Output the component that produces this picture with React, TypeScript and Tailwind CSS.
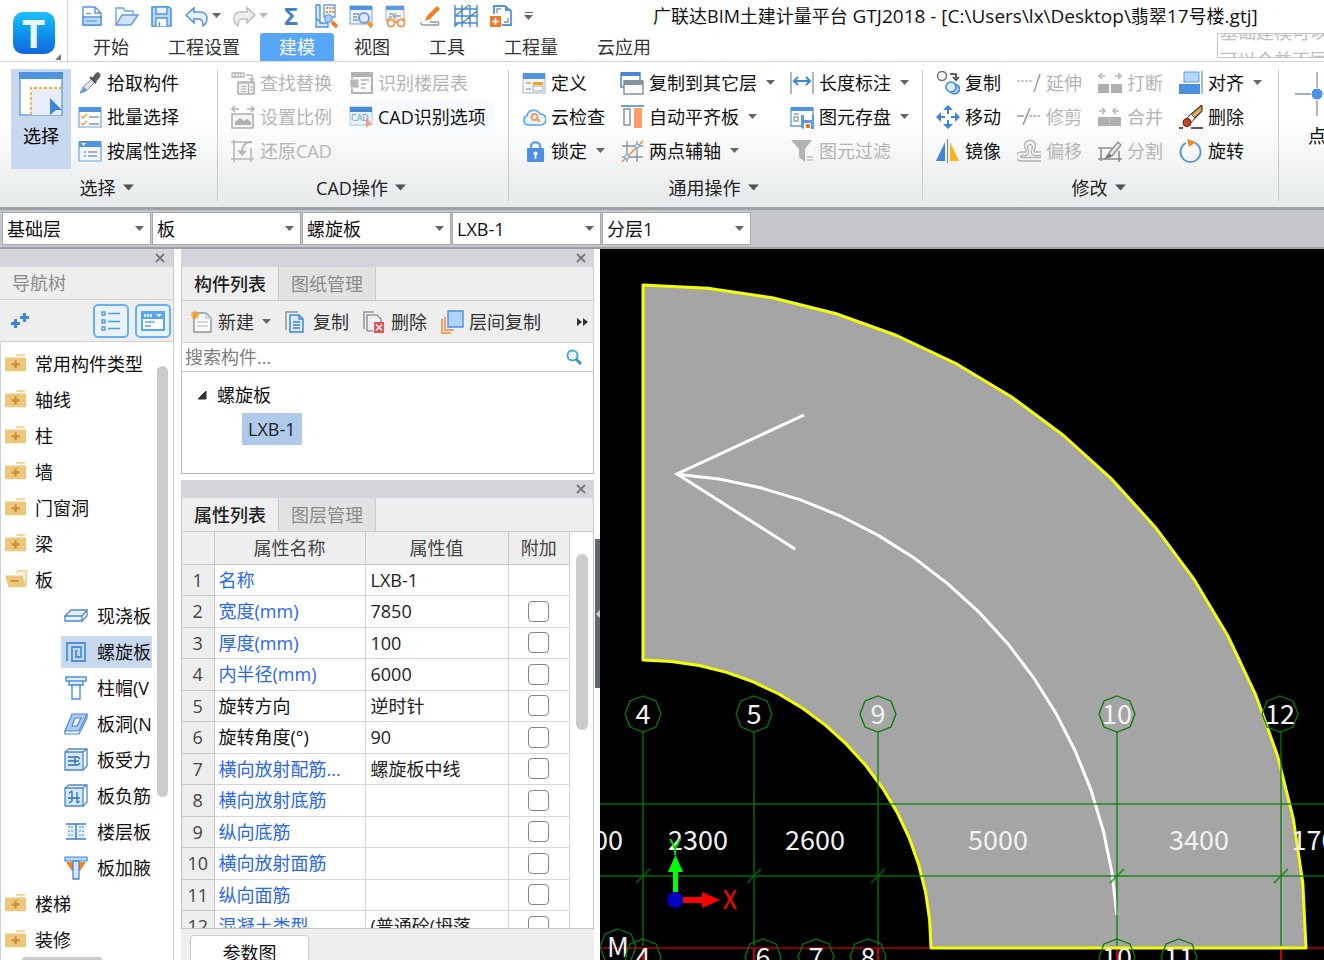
import { useState } from "react";
import type { ReactNode } from "react";
import clsx from "clsx";

const GLYPHS: Record<string, ReactNode> = {
  file: (
    <>
      <path d="M3 3h12l6 6v12H3z" fill="#fff" stroke="#4f94e0" strokeWidth="1.4" />
      <path d="M15 3v6h6" fill="none" stroke="#4f94e0" strokeWidth="1.4" />
      <path d="M3 13h18v8H3z" fill="#bcd9fa" stroke="#4f94e0" strokeWidth="1.4" />
      <path d="M6 9.500h5M6 17h11" stroke="#4f94e0" strokeWidth="1.2" />
    </>
  ),
  open: (
    <>
      <path d="M1 21V4h7l2 3h8v4" fill="#fff" stroke="#6aa5e8" strokeWidth="1.4" />
      <path d="M1 21l6-10h16l-7 10z" fill="#cfe3fb" stroke="#5b9be5" strokeWidth="1.4" />
    </>
  ),
  save: (
    <>
      <path d="M2 3h17l2 2v17H2z" fill="#b9d7fa" stroke="#4f94e0" strokeWidth="1.6" />
      <path d="M6 3h11v7H6z" fill="#e8f2fe" stroke="#4f94e0" strokeWidth="1.4" />
      <path d="M6 22v-8h11v8M9.500 22v-4" fill="#fff" stroke="#4f94e0" strokeWidth="1.4" />
    </>
  ),
  undo: <path d="M1 11l8-7v4h6c5 0 7 3 7 6s-1 6-4 8c0-4-1-7-4-7H9v4z" fill="#e6f1fe" stroke="#4f94e0" strokeWidth="1.5" />,
  redo: <path d="M23 11l-8-7v4H9c-5 0-7 3-7 6s1 6 4 8c0-4 1-7 4-7h5v4z" fill="#ededed" stroke="#bdbdbd" strokeWidth="1.5" />,
  measure: (
    <>
      <path d="M2 1h4v18h8v4H2zM2 14l6 6" fill="#d7e8fc" stroke="#4f94e0" strokeWidth="1.4" />
      <path d="M10 1h11v12H10z" fill="#fff" stroke="#6a9fdd" strokeWidth="1.4" />
      <path d="M12 4h8M12 8h8" stroke="#ef8a45" strokeWidth="2" strokeDasharray="2 1" />
      <circle cx="14.500" cy="14.500" r="4" fill="#aacbf5" stroke="#5c97dc" />
      <path d="M18 18l5 5" stroke="#ef7f2f" strokeWidth="4" />
    </>
  ),
  inspect: (
    <>
      <path d="M1 2h22v18H1z" fill="#eef3f8" stroke="#6aa3e2" />
      <path d="M1 2h22v4H1z" fill="#4f94e0" />
      <path d="M4 10h6M4 13h4M4 16h5" stroke="#8a949c" strokeWidth="1.4" />
      <circle cx="15" cy="14" r="5" fill="#dfe8fb" stroke="#6f9be0" strokeWidth="2" />
      <path d="M19 18l4 5" stroke="#f39a1f" strokeWidth="4" />
    </>
  ),
  review: (
    <>
      <path d="M2 2h18v15H2z" fill="#f3f5f7" stroke="#9fb2c4" />
      <path d="M2 2h18v4H2z" fill="#5b9be5" />
      <path d="M5 10h4M5 13h3M10 12h7m-5-3l-3 3 3 3" stroke="#95a0a8" strokeWidth="1.3" fill="none" />
      <circle cx="7" cy="19" r="3.500" fill="#fff" stroke="#f29a5b" strokeWidth="2" />
      <circle cx="17" cy="19" r="3.500" fill="#fff" stroke="#f29a5b" strokeWidth="2" />
      <path d="M3 17l2-3M21 17l-2-3M10 18h4" stroke="#f29a5b" strokeWidth="2" />
    </>
  ),
  brush: (
    <>
      <path d="M6 17l2-5L18 2l3 3-10 10z" fill="#f47b20" />
      <path d="M2 18c0 3 0 3 3 3h14c1 0 1-2 0-3h-8" fill="none" stroke="#8f979c" strokeWidth="1.4" />
    </>
  ),
  gridlines: (
    <path d="M1 1v22M8 1v22M16 1v22M23 1v22M1 5h22M1 12h22M1 19h22M1 12l14-11M8 19l15-12M1 22l5-4" stroke="#4a88cf" strokeWidth="1.4" fill="none" />
  ),
  addpage: (
    <>
      <path d="M5 10V2h11l6 5v14h-9" fill="#fff" stroke="#4f94e0" strokeWidth="1.8" />
      <path d="M16 2v5h6z" fill="#4f94e0" />
      <path d="M8 9V5h4M15 18h4v-4" stroke="#8a949c" strokeWidth="1.4" fill="none" />
      <path d="M1 12h11v11H1z" fill="#f07a28" />
      <path d="M6.500 14v7M3 17.500h7" stroke="#fff" strokeWidth="1.6" />
    </>
  ),
  dropper: (
    <>
      <path d="M15 7l3 3L8 20l-6 2 3-6z" fill="#dfe5ea" stroke="#8e969c" />
      <path d="M6 16l3 3-7 4z" fill="#4aa0e8" />
      <path d="M12 6l6 6" stroke="#4c4c4c" strokeWidth="2" />
      <path d="M14 7l4-5c2-2 6 1 4 4l-4 5z" fill="#5a5a5a" />
    </>
  ),
  batch: (
    <>
      <path d="M1 3h22v19H1z" fill="#fff" stroke="#6aa3e2" strokeWidth="1.200" />
      <path d="M1 2h22v5H1z" fill="#4f94e0" />
      <path d="M3 11l2 2 4-4M3 18l2 2 4-4" fill="none" stroke="#f39a3b" strokeWidth="1.5" />
      <path d="M11 12h10M11 19h10" stroke="#8b98a3" strokeWidth="1.500" />
    </>
  ),
  byattr: (
    <>
      <path d="M1 3h22v19H1z" fill="#f2f5f8" stroke="#6aa3e2" strokeWidth="1.200" />
      <path d="M1 2h22v6H1z" fill="#4f94e0" />
      <path d="M3 4h5L5.500 7z" fill="#fff" />
      <path d="M6 13h2M10 13h9M6 17h2M10 17h9" stroke="#8b98a3" strokeWidth="1.500" />
    </>
  ),
  replace: (
    <>
      <path d="M1 2h12v4H1zM4 2v4M7 2v4M10 2v4M15 4h6v5m-3-2l3 3 2-3" fill="none" stroke="#b5b5b5" strokeWidth="1.3" />
      <path d="M7 11h16v12H7z" fill="#f2f2f2" stroke="#b0b0b0" strokeWidth="1.600" />
      <path d="M7 12h16M10 15.500h5M10 18h5M10 20.500h5M17.500 13v10M19 16h3M19 19h3" stroke="#b0b0b0" strokeWidth="1.2" />
    </>
  ),
  scale: (
    <>
      <path d="M1 4h7M4 1L1 4l3 3M23 4h-7M20 1l3 3-3 3" fill="none" stroke="#b5b5b5" strokeWidth="1.6" />
      <path d="M1 9h21v14H1z" fill="#f4f4f4" stroke="#b0b0b0" strokeWidth="1.6" />
      <path d="M4 20v-3l5-4 4 3 3-2 4 3v3z" fill="#b0b0b0" />
    </>
  ),
  restore: (
    <>
      <path d="M3 1v22M0 3h21M20 9v14M0 20h23" stroke="#b8b8b8" strokeWidth="1.600" fill="none" />
      <path d="M21 3c-7 0-10 4-10 10" stroke="#b5b5b5" strokeWidth="1.800" fill="none" />
      <path d="M6 11l5 6 5-5z" fill="#b5b5b5" />
    </>
  ),
  floors: (
    <>
      <path d="M3 2h20v20H3z" fill="#fafafa" stroke="#b3b3b3" strokeWidth="2" />
      <path d="M3 2h20v4H3z" fill="#b3b3b3" />
      <path d="M1 8h9v9H1z" fill="#b8b8b8" stroke="#f5f5f5" />
      <path d="M12 9h8M12 13h5M12 17h4" stroke="#b3b3b3" strokeWidth="1.500" />
    </>
  ),
  cad: (
    <>
      <path d="M1 2h22v18H1z" fill="#eaf2fc" stroke="#a8c4e6" />
      <path d="M1 2h22v5H1z" fill="#4788d4" />
      <text x="2" y="16" fontSize="9" fill="#5a9be6">CAD</text>
      <path d="M17 12l6 8-3 0-3 3z" fill="#f79a74" />
    </>
  ),
  define: (
    <>
      <path d="M1 3h22v19H1z" fill="#f4f6f8" stroke="#a9b4be" />
      <path d="M1 2h22v6H1z" fill="#4f94e0" />
      <path d="M11 11h10v3H11z" fill="#f5a12c" />
      <path d="M11 15h10v5H11z" fill="none" stroke="#a5afb8" />
      <path d="M4 18h5" stroke="#a5afb8" strokeWidth="1.500" />
      <path d="M4 12h5" stroke="#f5a12c" strokeWidth="1.500" />
    </>
  ),
  cloud: (
    <>
      <path d="M6 20a5 5 0 01-1-9.500A7 7 0 0118 9a5.500 5.500 0 011 11z" fill="#eaf4ff" stroke="#57a5f5" strokeWidth="1.6" />
      <circle cx="12.500" cy="12" r="3" fill="none" stroke="#f39a5b" strokeWidth="1.8" />
      <path d="M15 14l3 3" stroke="#f39a5b" strokeWidth="2" />
    </>
  ),
  lock: (
    <>
      <path d="M9 11V6a5 5 0 019 0v5" fill="none" stroke="#6ba6e6" strokeWidth="2.500" />
      <rect x="5" y="9" width="17" height="14" rx="1" fill="#4b90e2" />
      <circle cx="13.500" cy="14.500" r="2" fill="#fff" />
      <path d="M13.500 15v5" stroke="#fff" strokeWidth="1.600" />
    </>
  ),
  copyfloor: (
    <>
      <path d="M1 2h19v14H1z" fill="#fff" stroke="#4788d4" strokeWidth="1.500" />
      <path d="M1 1h19v4H1z" fill="#4788d4" />
      <path d="M4 10h19v13H4z" fill="#fbfbfb" stroke="#87939c" strokeWidth="1.500" />
      <path d="M4 9h19v5H4z" fill="#87939c" />
    </>
  ),
  flush: (
    <>
      <path d="M1 1h23" stroke="#4788d4" strokeWidth="1.600" />
      <path d="M4 4h6v16H4z" fill="#fbfbfb" stroke="#87939c" strokeWidth="1.500" />
      <path d="M14 3h8v20h-8z" fill="#ff9e6d" />
    </>
  ),
  axis: (
    <>
      <path d="M7 2v21M17 2v21M2 7h21M2 18h21" stroke="#87939c" strokeWidth="1.300" />
      <path d="M2 23L23 2" stroke="#f08a3c" strokeWidth="1.600" />
      <circle cx="7" cy="18" r="2" fill="#fff" stroke="#5b9be5" />
      <circle cx="17" cy="7" r="2" fill="#fff" stroke="#5b9be5" />
    </>
  ),
  length: (
    <>
      <path d="M1 1v22M23 1v22" stroke="#87939c" strokeWidth="1.300" />
      <path d="M4 10h16M8 6l-4 4 4 4M16 6l4 4-4 4" fill="none" stroke="#3f86d8" strokeWidth="2" />
    </>
  ),
  store: (
    <>
      <path d="M1 3h22v18H1z" fill="#fff" stroke="#5b9be5" strokeWidth="1.300" />
      <path d="M1 2h22v4H1z" fill="#4f94e0" />
      <path d="M4 9h5M4 12h4v4H4z" stroke="#97a1a9" strokeWidth="1.300" fill="none" />
      <path d="M11 10h13v14H13l-2-2z" fill="#5b9be5" />
      <path d="M14 10h8v5h-8z" fill="#fff" />
      <path d="M14 18h7v6h-7z" fill="#fff" />
      <path d="M16 19h4v4h-4z" fill="#e8742a" />
    </>
  ),
  filter: (
    <>
      <path d="M1 1h21l-7 9v13l-6-5v-8z" fill="#b3b3b3" />
      <path d="M17 18h6M17 21h6" stroke="#c2c2c2" strokeWidth="1.300" />
    </>
  ),
  copy: (
    <>
      <circle cx="6" cy="5" r="4.500" fill="#f3f3f3" stroke="#777" strokeWidth="1.600" />
      <path d="M14 3h6v4m-3-1l3 3 3-3" fill="none" stroke="#333" strokeWidth="1.600" />
      <circle cx="18.500" cy="18" r="5" fill="#a7d0f7" stroke="#3f86d8" strokeWidth="1.500" />
      <circle cx="15" cy="16" r="5" fill="#dcedfd" stroke="#3f86d8" strokeWidth="1.500" />
    </>
  ),
  move: (
    <path d="M12 0l5 5h-4v4h-2V5H7zM12 24l5-5h-4v-4h-2v4H7zM0 12l5-5v4h4v2H5v4zM24 12l-5-5v4h-4v2h4v4z" fill="#3f86d8" />
  ),
  mirror: (
    <>
      <path d="M9 3v19H0z" fill="#3f86d8" />
      <path d="M14 3v19h9z" fill="#f9b11d" />
      <path d="M11.500 0v24" stroke="#87939c" strokeWidth="1.300" />
    </>
  ),
  extend: (
    <>
      <path d="M0 10h16" stroke="#bdbdbd" strokeWidth="1.500" strokeDasharray="3 1" />
      <path d="M23 3l-6 18" stroke="#a5a5a5" strokeWidth="1.600" />
    </>
  ),
  trim: (
    <>
      <path d="M0 11h7" stroke="#999" strokeWidth="1.500" />
      <path d="M12 11h12" stroke="#adadad" strokeWidth="1.500" strokeDasharray="3 1" />
      <path d="M13 3L6 20" stroke="#999" strokeWidth="1.600" />
    </>
  ),
  offset: (
    <>
      <path d="M24 22H4a4 4 0 010-9h4c2 0 1-2 0-4a5.500 5.500 0 1110 0c-1 2-2 4 1 4h5" fill="none" stroke="#b3b3b3" strokeWidth="1.500" />
      <path d="M24 18.500H5c-2 0-2-2 0-2h4c3-1 3-4 2-7a2.500 2.500 0 114 0c-1 3-1 6 2 7h7" fill="none" stroke="#b3b3b3" strokeWidth="1.300" />
    </>
  ),
  split: (
    <>
      <path d="M0 13h11v9H0zM13 13h11v9H13z" fill="#b0b0b0" />
      <path d="M1 5h6M4 2L1 5l3 3M23 5h-6M20 2l3 3-3 3" fill="none" stroke="#b8b8b8" strokeWidth="1.600" />
    </>
  ),
  merge: (
    <>
      <path d="M0 12h23v9H0z" fill="#b0b0b0" />
      <path d="M11.500 12v9" stroke="#c8c8c8" />
      <path d="M1 6h6M4 3l3 3-3 3M21 6h-6M18 3l-3 3 3 3" fill="none" stroke="#b8b8b8" strokeWidth="1.600" />
    </>
  ),
  divide: (
    <>
      <path d="M0 9h14M3 9v13M0 20h24M21 12v11" fill="none" stroke="#8e8e8e" strokeWidth="1.600" />
      <path d="M7 20l4-6 9-11 3 3-9 11z" fill="#e8e8e8" stroke="#8e8e8e" strokeWidth="1.300" />
      <path d="M7 20l4-6 3 3z" fill="#777" />
    </>
  ),
  align: (
    <>
      <path d="M5 1h15v10H5z" fill="#b7d6fb" stroke="#5b9be5" />
      <path d="M0 13h21v10H0z" fill="#4b90e2" />
      <path d="M23 0v23" stroke="#87939c" strokeWidth="1.300" />
    </>
  ),
  erase: (
    <>
      <path d="M23 0v6L14 15l-4-4z" fill="#dfae6b" stroke="#3d2f22" strokeWidth="1.200" />
      <path d="M12 9l4 4-4 5-5-4z" fill="#e9ecef" stroke="#555" />
      <circle cx="8" cy="17.500" r="4" fill="#c9441d" stroke="#5b2010" />
      <path d="M0 23h4M12 23h12" stroke="#222" strokeWidth="1.300" />
    </>
  ),
  rotate: (
    <>
      <path d="M16 4a10 10 0 11-9 0" fill="none" stroke="#4b90e2" strokeWidth="1.800" />
      <path d="M8 0l9 3-7 5z" fill="#f0862c" />
    </>
  ),
  slab: (
    <path d="M1 12l6-6h16l-5 6zM1 12v5h17v-5M18 17l5-5V6" fill="#e4f0fd" stroke="#4b88ce" strokeWidth="1.300" />
  ),
  spiral: (
    <path d="M3 21V3h18v18H8V7h9v10h-5v-6h1.500" fill="none" stroke="#4b90e2" strokeWidth="1.800" />
  ),
  cap: (
    <>
      <path d="M2 1h20v4H2zM5 5h14v4H5z" fill="#e4f0fd" stroke="#4b90e2" strokeWidth="1.400" />
      <path d="M8 9h8v14H8z" fill="#fff" stroke="#4b90e2" strokeWidth="1.400" />
    </>
  ),
  hole: (
    <>
      <path d="M8 2h15l-8 17H1z" fill="#a9cbf4" stroke="#4b88ce" strokeWidth="1.200" />
      <path d="M11 6h6l-4 8H8z" fill="#eef6ff" stroke="#4b88ce" strokeWidth="1.200" />
      <path d="M1 19v3h14l8-16V2" fill="none" stroke="#4b88ce" strokeWidth="1.200" />
    </>
  ),
  rebarA: (
    <>
      <path d="M1 4h18v18H1z" fill="#d3e6fb" stroke="#4b88ce" strokeWidth="1.300" />
      <path d="M1 4l4-3h18v17l-4 4M19 4l4-3" fill="none" stroke="#4b88ce" strokeWidth="1.300" />
      <path d="M4 9h10l2 2M4 17h10l2-2M4 13h11M11 9v8" fill="none" stroke="#2f6fbb" strokeWidth="1.300" />
    </>
  ),
  rebarB: (
    <>
      <path d="M1 4h18v18H1z" fill="#d3e6fb" stroke="#4b88ce" strokeWidth="1.300" />
      <path d="M1 4l4-3h18v17l-4 4M19 4l4-3" fill="none" stroke="#4b88ce" strokeWidth="1.300" />
      <path d="M8 7v10l-3 2M13 8v11M4 14h12M5 9l3-2M13 19l3-2" fill="none" stroke="#2f6fbb" strokeWidth="1.300" />
    </>
  ),
  strip: (
    <>
      <path d="M3 4h18v15H3z" fill="#e4f0fd" />
      <path d="M2 4h20M2 19h20M12 4v15" stroke="#3f7fca" strokeWidth="1.500" />
      <path d="M5 6v12M8 6v12M16 6v12M19 6v12" stroke="#4b90e2" strokeWidth="1" strokeDasharray="2 2" />
    </>
  ),
  haunch: (
    <>
      <path d="M2 6h20l-6 9H8z" fill="#f58220" />
      <path d="M1 1h22v4H1z" fill="#b7d6fb" stroke="#4b88ce" strokeWidth="1.200" />
      <path d="M9 5h6v18H9z" fill="#d3e6fb" stroke="#4b88ce" strokeWidth="1.300" />
    </>
  ),
  folder: (
    <>
      <path d="M12 3c0-1 1-2 2-2h6c1 0 2 1 2 2z" fill="#f0ce8c" />
      <path d="M0 5h23v14c0 1-1 1-1 1H1s-1 0-1-1z" fill="#efc77c" />
      <path d="M11.500 8v9M7 12.500h9" stroke="#c69435" strokeWidth="2.500" />
    </>
  ),
  folderopen: (
    <>
      <path d="M13 4l1-2h9v17" fill="#fbf1dc" stroke="#efc77c" strokeWidth="1.500" />
      <path d="M0 7h19l4 13H4z" fill="#efc77c" />
      <path d="M6 13h9" stroke="#c69435" strokeWidth="2" />
    </>
  ),
  newitem: (
    <>
      <path d="M4 3h12l5 5v14H4z" fill="#fbfbfb" stroke="#8c979f" strokeWidth="1.400" />
      <path d="M16 3v5h5M7 12h11M7 16h11" fill="none" stroke="#c3cad0" strokeWidth="1.300" />
      <path d="M5 1v8M1 5h8M2 2l6 6M8 2L2 8" stroke="#fb9a26" strokeWidth="1.500" />
    </>
  ),
  duplicate: (
    <>
      <path d="M1 20V2h12" fill="none" stroke="#8c979f" strokeWidth="1.500" />
      <path d="M5 5h9l4 4v13H5z" fill="#dcebfc" stroke="#3f86d8" strokeWidth="1.500" />
      <path d="M14 5v4h4M8 12h7M8 15h7M8 18h7" fill="none" stroke="#3f86d8" strokeWidth="1.300" />
    </>
  ),
  remove: (
    <>
      <path d="M1 19V2h10M4 21V5h10l4 4v4M4 21h6" fill="none" stroke="#8c979f" strokeWidth="1.500" />
      <path d="M11 12h10v11H11z" fill="#e0555a" />
      <path d="M13 14.500l6 6M19 14.500l-6 6" stroke="#fff" strokeWidth="1.400" />
    </>
  ),
  between: (
    <>
      <path d="M1 9v14h9M4 7v13h9" fill="none" stroke="#f08a3c" strokeWidth="1.500" />
      <path d="M7 1h15v16H7z" fill="#b0d3fb" stroke="#4b90e2" strokeWidth="1.400" />
    </>
  ),
};

function Glyph({ name, className = "size-6" }: { name: string; className?: string }) {
  return (
    <svg viewBox="0 0 24 24" className={clsx("shrink-0", className)} aria-hidden="true">
      {GLYPHS[name]}
    </svg>
  );
}

function Caret({ className = "text-[#666]" }: { className?: string }) {
  return (
    <svg viewBox="0 0 9 6" className={clsx("h-[6px] w-[9px] shrink-0", className)} aria-hidden="true">
      <path d="M0 0h9L4.500 5z" fill="currentColor" />
    </svg>
  );
}

type Tool = { icon: string; label: string; off?: boolean; menu?: boolean; hot?: boolean };

const cadTools: Tool[][] = [
  [
    { icon: "replace", label: "查找替换", off: true },
    { icon: "scale", label: "设置比例", off: true },
    { icon: "restore", label: "还原CAD", off: true },
  ],
  [
    { icon: "floors", label: "识别楼层表", off: true },
    { icon: "cad", label: "CAD识别选项", hot: true },
  ],
];

const commonTools: Tool[][] = [
  [
    { icon: "define", label: "定义" },
    { icon: "cloud", label: "云检查" },
    { icon: "lock", label: "锁定", menu: true },
  ],
  [
    { icon: "copyfloor", label: "复制到其它层", menu: true },
    { icon: "flush", label: "自动平齐板", menu: true },
    { icon: "axis", label: "两点辅轴", menu: true },
  ],
  [
    { icon: "length", label: "长度标注", menu: true },
    { icon: "store", label: "图元存盘", menu: true },
    { icon: "filter", label: "图元过滤", off: true },
  ],
];

const editTools: Tool[][] = [
  [
    { icon: "copy", label: "复制" },
    { icon: "move", label: "移动" },
    { icon: "mirror", label: "镜像" },
  ],
  [
    { icon: "extend", label: "延伸", off: true },
    { icon: "trim", label: "修剪", off: true },
    { icon: "offset", label: "偏移", off: true },
  ],
  [
    { icon: "split", label: "打断", off: true },
    { icon: "merge", label: "合并", off: true },
    { icon: "divide", label: "分割", off: true },
  ],
  [
    { icon: "align", label: "对齐", menu: true },
    { icon: "erase", label: "删除" },
    { icon: "rotate", label: "旋转" },
  ],
];

const selectTools: Tool[] = [
  { icon: "dropper", label: "拾取构件" },
  { icon: "batch", label: "批量选择" },
  { icon: "byattr", label: "按属性选择" },
];

function ToolColumn({ tools }: { tools: Tool[] }) {
  return (
    <div className="flex flex-col items-start">
      {tools.map((tool) => (
        <button
          key={tool.label}
          type="button"
          disabled={tool.off}
          className={clsx(
            "flex h-[34px] items-center gap-[5px] whitespace-nowrap",
            tool.off ? "text-[#b4b4b4]" : "text-[#111]",
            tool.hot && "bg-[#f7faff] pr-2",
          )}
        >
          <Glyph name={tool.icon} />
          {tool.label}
          {tool.menu ? <Caret className="ml-1 text-[#666]" /> : null}
        </button>
      ))}
    </div>
  );
}

function RibbonGroup({ title, className, children }: { title: string; className: string; children: ReactNode }) {
  return (
    <section className={clsx("flex shrink-0 flex-col", className)}>
      <div className="flex h-[105px]">{children}</div>
      <button type="button" className="flex h-[34px] items-center justify-center gap-2 pr-[5px] text-[#222]">
        {title}
        <Caret className="scale-125 text-[#555]" />
      </button>
    </section>
  );
}

function Divider() {
  return <div className="my-1 w-px shrink-0 bg-[#c9cccd]" />;
}

const quickLeft = ["file", "open", "save"];
const quickRight = ["measure", "inspect", "review", "brush", "gridlines", "addpage"];
const menuTabs = ["开始", "工程设置", "建模", "视图", "工具", "工程量", "云应用"];

function Header() {
  const [tab, setTab] = useState("建模");

  return (
    <header className="flex h-[62px] shrink-0 overflow-hidden border-b border-[#d6d6d6] bg-white">
      <div className="relative flex w-[67px] shrink-0 items-center justify-center pt-1">
        <div className="flex size-[42px] items-center justify-center rounded-[10px] bg-linear-to-b from-[#1cc0fb] to-[#1466dd] text-[40px] leading-none font-bold text-[#e9f6ff]">
          T
        </div>
        <svg viewBox="0 0 6 6" className="absolute right-[6px] bottom-[1px] size-[6px]" aria-hidden="true">
          <path d="M6 0v6H0z" fill="#777" />
        </svg>
      </div>
      <div className="flex min-w-0 flex-1 flex-col border-l border-[#d6d6d6]">
        <div className="flex h-8 shrink-0 items-center pl-3">
          <div className="flex shrink-0 items-center gap-[11px]">
            {quickLeft.map((name) => (
              <button key={name} type="button" aria-label={name}>
                <Glyph name={name} />
              </button>
            ))}
            <button type="button" aria-label="undo" className="flex items-center gap-[3px]">
              <Glyph name="undo" />
              <Caret />
            </button>
            <button type="button" aria-label="redo" className="flex items-center gap-[3px]">
              <Glyph name="redo" />
              <Caret className="text-[#bbb]" />
            </button>
            <button type="button" aria-label="sum" className="w-6 text-[24px] leading-6 font-bold text-[#3f7fca]">
              Σ
            </button>
            {quickRight.map((name) => (
              <button key={name} type="button" aria-label={name}>
                <Glyph name={name} />
              </button>
            ))}
            <button type="button" aria-label="more" className="flex flex-col items-center gap-[2px]">
              <span className="h-px w-2 bg-[#666]" />
              <Caret />
            </button>
          </div>
          <h1 className="ml-[120px] whitespace-nowrap text-[#111]">
            广联达BIM土建计量平台 <span className="text-[19px]">GTJ2018 - [C:\Users\lx\Desktop\</span>翡翠
            <span className="text-[19px]">17</span>号楼<span className="text-[19px]">.gtj]</span>
          </h1>
        </div>
        <div className="mt-px flex h-7 shrink-0 justify-between">
          <nav className="flex shrink-0 gap-px pl-[6px]">
            {menuTabs.map((name) => (
              <button
                key={name}
                type="button"
                onClick={() => setTab(name)}
                className={clsx(
                  "rounded-t-[3px] px-[19px] whitespace-nowrap",
                  tab === name ? "bg-[#58a6f8] text-white" : "text-[#333]",
                )}
              >
                {name}
              </button>
            ))}
          </nav>
          <div className="flex h-[25px] w-[107px] shrink-0 flex-col justify-center overflow-hidden border border-r-0 border-[#c6c6c6] pl-[2px] leading-[28px] whitespace-nowrap text-[#bdbdbd]">
            <p>基础建模可以设</p>
            <p>可以合并不同工</p>
          </div>
        </div>
      </div>
    </header>
  );
}

function Ribbon() {
  return (
    <div className="flex shrink-0 overflow-hidden border-b-[3px] border-[#9ba2a6] bg-linear-to-b from-white from-40% to-[#e6eaea] pt-1 pb-[2px]">
      <RibbonGroup title="选择" className="w-[217px]">
        <div className="flex pl-[11px]">
          <button type="button" className="mt-[3px] mr-[7px] flex h-[100px] w-[60px] flex-col items-center gap-2 bg-[#c8d8ef] pt-[3px]">
            <svg viewBox="0 0 44 44" className="size-11" aria-hidden="true">
              <path d="M1 1h42v42H1z" fill="#fff" stroke="#6aa3e2" strokeWidth="1.500" />
              <path d="M0 0h44v7H0z" fill="#4f94e0" />
              <path d="M12 16h30v27H12z" fill="#e8ecf6" />
              <path d="M12 43V16h30" fill="none" stroke="#f5b02c" strokeWidth="1.800" strokeDasharray="3 2" />
              <path d="M31 26l12 12h-6l-6 5z" fill="#3f86d8" />
            </svg>
            选择
          </button>
          <ToolColumn tools={selectTools} />
        </div>
      </RibbonGroup>
      <Divider />
      <RibbonGroup title="CAD操作" className="w-[290px]">
        <div className="flex gap-[17px] pl-[13px]">
          {cadTools.map((tools) => (
            <ToolColumn key={tools[0].label} tools={tools} />
          ))}
        </div>
      </RibbonGroup>
      <Divider />
      <RibbonGroup title="通用操作" className="w-[413px]">
        <div className="flex gap-[15px] pl-[13px]">
          {commonTools.map((tools) => (
            <ToolColumn key={tools[0].label} tools={tools} />
          ))}
        </div>
      </RibbonGroup>
      <Divider />
      <RibbonGroup title="修改" className="w-[355px]">
        <div className="flex gap-4 pl-[13px]">
          {editTools.map((tools) => (
            <ToolColumn key={tools[0].label} tools={tools} />
          ))}
        </div>
      </RibbonGroup>
      <Divider />
      <button type="button" className="flex h-[100px] shrink-0 flex-col items-center gap-2 pt-[6px] pl-4">
        <svg viewBox="0 0 44 44" className="size-11" aria-hidden="true">
          <path d="M22 0v44M0 22h44" stroke="#87939c" strokeWidth="1.300" />
          <circle cx="22" cy="22" r="6" fill="#4b90e2" stroke="#fff" />
        </svg>
        点
      </button>
    </div>
  );
}

const pickers = [
  { id: "floor", name: "楼层", value: "基础层" },
  { id: "category", name: "类别", value: "板" },
  { id: "kind", name: "类型", value: "螺旋板" },
  { id: "member", name: "构件", value: "LXB-1" },
  { id: "layer", name: "分层", value: "分层1" },
];

function PickerBar() {
  return (
    <div className="flex shrink-0 gap-px overflow-hidden border-b-2 border-[#9aa0a4] bg-[#c5c7ca] py-[2px] pl-[2px]">
      {pickers.map((picker) => (
        <div key={picker.id} className="relative w-[149px] shrink-0">
          <select
            id={picker.id}
            aria-label={picker.name}
            defaultValue={picker.value}
            className="h-[33px] w-full appearance-none border border-[#a6a8ab] bg-white px-1 text-[#111]"
          >
            <option>{picker.value}</option>
          </select>
          <Caret className="pointer-events-none absolute top-[14px] right-[7px] text-[#666]" />
        </div>
      ))}
    </div>
  );
}

function PanelStrip() {
  return (
    <div className="flex h-[18px] shrink-0 items-center justify-end bg-[#d3d5db] pr-2">
      <button type="button" aria-label="关闭" className="flex size-[10px] items-center justify-center">
        <svg viewBox="0 0 10 10" className="size-[10px]">
          <path d="M1 1l8 8M9 1L1 9" stroke="#777" strokeWidth="1.800" />
        </svg>
      </button>
    </div>
  );
}

type Node = { label: string; icon: string; child?: boolean };

const nodes: Node[] = [
  { label: "常用构件类型", icon: "folder" },
  { label: "轴线", icon: "folder" },
  { label: "柱", icon: "folder" },
  { label: "墙", icon: "folder" },
  { label: "门窗洞", icon: "folder" },
  { label: "梁", icon: "folder" },
  { label: "板", icon: "folderopen" },
  { label: "现浇板", icon: "slab", child: true },
  { label: "螺旋板", icon: "spiral", child: true },
  { label: "柱帽(V", icon: "cap", child: true },
  { label: "板洞(N", icon: "hole", child: true },
  { label: "板受力", icon: "rebarA", child: true },
  { label: "板负筋", icon: "rebarB", child: true },
  { label: "楼层板", icon: "strip", child: true },
  { label: "板加腋", icon: "haunch", child: true },
  { label: "楼梯", icon: "folder" },
  { label: "装修", icon: "folder" },
];

function NavTree() {
  const [current, setCurrent] = useState("螺旋板");

  return (
    <aside className="flex w-[174px] shrink-0 flex-col overflow-hidden border-r border-[#c9ccd1]">
      <PanelStrip />
      <h2 className="h-[33px] shrink-0 border-b border-[#cfd1d5] bg-[#eeeeee] pl-3 leading-[32px] text-[#8a8a8a]">导航树</h2>
      <div className="flex h-[42px] shrink-0 items-center border-b border-[#cfd1d5] bg-[#eeeeee] pr-[2px] pl-[10px]">
        <button type="button" aria-label="展开" className="mr-auto">
          <svg viewBox="0 0 20 18" className="h-[18px] w-5">
            <path d="M5.500 7v9M1 11.500h9M14.500 1v9M10 5.500h9" stroke="#3f86d8" strokeWidth="3" />
          </svg>
        </button>
        <button type="button" aria-label="列表" className="mr-[6px] flex h-[34px] w-9 items-center justify-center rounded-[5px] border-2 border-[#6bb0f6] bg-[#e8f3fe]">
          <svg viewBox="0 0 20 22" className="h-[22px] w-5" fill="none" stroke="#4f9bea" strokeWidth="1.400">
            <path d="M1 2h3v3H1zM1 10h3v3H1zM1 17h3v3H1zM7 3.500h12M7 11.500h12M7 18.500h12" />
          </svg>
        </button>
        <button type="button" aria-label="卡片" className="flex h-[34px] w-9 items-center justify-center rounded-[5px] border-2 border-[#6bb0f6] bg-[#e8f3fe]">
          <svg viewBox="0 0 24 22" className="h-[22px] w-6">
            <path d="M1 2h22v18H1z" fill="#fff" stroke="#58a6f8" strokeWidth="2" />
            <path d="M1 2h22v7H1z" fill="#58a6f8" />
            <path d="M4 4v3M7 4v3M10 4v3" stroke="#fff" strokeWidth="1.600" />
            <path d="M15 4h6l-3 3z" fill="#fff" />
            <path d="M4 12h10M4 16h6" stroke="#58a6f8" strokeWidth="1.500" />
          </svg>
        </button>
      </div>
      <div className="flex min-h-0 flex-1 border-l border-[#cfd1d5] bg-white">
        <div className="flex w-[151px] shrink-0 flex-col overflow-hidden pt-1">
          {nodes.map((node) => (
            <button
              key={node.label}
              type="button"
              onClick={() => setCurrent(node.label)}
              className={clsx("flex h-9 shrink-0 items-center whitespace-nowrap text-[#111]", node.child ? "pl-[60px]" : "gap-2 pl-1")}
            >
              {node.child ? (
                <span className={clsx("flex h-8 flex-1 items-center gap-[9px] pl-[3px]", current === node.label && "bg-[#c8d8ef]")}>
                  <Glyph name={node.icon} />
                  {node.label}
                </span>
              ) : (
                <>
                  <Glyph name={node.icon} className="size-[22px]" />
                  {node.label}
                </>
              )}
            </button>
          ))}
        </div>
        <div className="mt-6 ml-[5px] h-[431px] w-[11px] shrink-0 rounded-full bg-[#cbcbcb]" />
      </div>
      <div className="-mt-[3px] ml-[22px] h-[3px] w-[80px] shrink-0 rounded-t-full bg-[#cbcbcb]" />
    </aside>
  );
}

function PanelTabs({ tabs }: { tabs: string[] }) {
  return (
    <div className="flex h-[34px] shrink-0 border-x border-b border-[#c9ccd1] bg-[#eeeeee]">
      {tabs.map((name, i) => (
        <button
          key={name}
          type="button"
          className={clsx(
            "border-r border-[#c9ccd1] px-3 whitespace-nowrap",
            i === 0 ? "font-medium text-[#222]" : "bg-[#e2e2e2] text-[#8a8a8a]",
          )}
        >
          {name}
        </button>
      ))}
    </div>
  );
}

function MemberPanel() {
  return (
    <section className="flex h-[225px] shrink-0 flex-col">
      <PanelStrip />
      <PanelTabs tabs={["构件列表", "图纸管理"]} />
      <div className="flex h-[42px] shrink-0 items-center gap-[14px] border-x border-b border-[#cfd1d5] bg-[#eeeeee] px-2 pt-px whitespace-nowrap text-[#333]">
        <button type="button" className="flex items-center gap-1">
          <Glyph name="newitem" />
          新建
          <Caret className="ml-1 text-[#666]" />
        </button>
        <button type="button" className="flex items-center gap-1">
          <Glyph name="duplicate" />
          复制
        </button>
        <button type="button" className="flex items-center gap-1">
          <Glyph name="remove" />
          删除
        </button>
        <button type="button" className="flex items-center gap-1">
          <Glyph name="between" />
          层间复制
        </button>
        <button type="button" aria-label="更多" className="-mr-1 ml-auto">
          <svg viewBox="0 0 12 10" className="h-[10px] w-3">
            <path d="M0 1l5 4-5 4zM6 1l5 4-5 4z" fill="#333" />
          </svg>
        </button>
      </div>
      <div className="flex h-[29px] shrink-0 items-center border-x border-b border-[#c3c8cc] bg-white pr-[11px] pl-[3px]">
        <input
          type="text"
          aria-label="搜索构件"
          placeholder="搜索构件..."
          className="min-w-0 flex-1 outline-none placeholder:text-[#808080]"
        />
        <svg viewBox="0 0 16 16" className="size-4" aria-hidden="true">
          <circle cx="6.500" cy="6.500" r="5" fill="#eaf6fd" stroke="#4ba3cf" strokeWidth="2" />
          <path d="M10 10l5 5" stroke="#3b92c3" strokeWidth="3" />
        </svg>
      </div>
      <div className="flex-1 border border-t-0 border-[#b4b8bc] bg-white pt-1">
        <div className="flex h-[37px] items-center gap-[10px] pl-[15px] text-[#111]">
          <svg viewBox="0 0 10 10" className="size-[10px]" aria-hidden="true">
            <path d="M9 1v8H1z" fill="#333" stroke="#333" />
          </svg>
          螺旋板
        </div>
        <button type="button" className="ml-[60px] h-8 bg-[#b0caec] px-[6px] text-[#222]">
          LXB-1
        </button>
      </div>
    </section>
  );
}

const properties = [
  { name: "名称", value: "LXB-1", blue: true, bare: true },
  { name: "宽度(mm)", value: "7850", blue: true },
  { name: "厚度(mm)", value: "100", blue: true },
  { name: "内半径(mm)", value: "6000", blue: true },
  { name: "旋转方向", value: "逆时针" },
  { name: "旋转角度(°)", value: "90" },
  { name: "横向放射配筋...", value: "螺旋板中线", blue: true },
  { name: "横向放射底筋", value: "", blue: true },
  { name: "纵向底筋", value: "", blue: true },
  { name: "横向放射面筋", value: "", blue: true },
  { name: "纵向面筋", value: "", blue: true },
  { name: "混凝土类型", value: "(普通砼(坍落", blue: true },
];

function PropertyPanel() {
  return (
    <section className="flex min-h-0 flex-1 flex-col">
      <PanelStrip />
      <PanelTabs tabs={["属性列表", "图层管理"]} />
      <div className="flex min-h-0 flex-1 items-start overflow-hidden border-x border-b border-[#c0c3c7] bg-white">
        <table className="w-[388px] table-fixed border-collapse">
          <thead>
            <tr className="h-8 bg-[#eeeeee] text-[#444]">
              <th scope="col" className="w-8 border-r border-b border-[#c9c9c9]" />
              <th scope="col" className="w-[151px] border-r border-b border-[#c9c9c9] p-0 font-normal">属性名称</th>
              <th scope="col" className="w-[143px] border-r border-b border-[#c9c9c9] p-0 font-normal">属性值</th>
              <th scope="col" className="border-r border-b border-[#c9c9c9] p-0 font-normal">附加</th>
            </tr>
          </thead>
          <tbody>
            {properties.map((row, i) => (
              <tr key={row.name} className="odd:h-[31px] even:h-8">
                <td className="border-r border-b border-[#c9c9c9] bg-[#eeeeee] p-0 text-center text-[#444]">{i + 1}</td>
                <td className={clsx("border-r border-b border-[#d6d6d6] p-0 pl-1 whitespace-nowrap", row.blue ? "text-[#2a66f5]" : "text-[#111]")}>
                  {row.name}
                </td>
                <td className="border-r border-b border-[#d6d6d6] p-0 pl-[5px] whitespace-nowrap text-[#222]">{row.value}</td>
                <td className="border-r border-b border-[#d6d6d6] p-0">
                  {row.bare ? null : (
                    <input
                      type="checkbox"
                      aria-label={row.name}
                      className="mx-auto block size-[21px] appearance-none rounded-[4px] border border-[#858585] bg-white checked:bg-[#58a6f8]"
                    />
                  )}
                </td>
              </tr>
            ))}
          </tbody>
        </table>
        <div className="mt-[22px] ml-[6px] h-[176px] w-[12px] rounded-full bg-[#cbcbcb]" />
      </div>
      <div className="h-[31px] shrink-0 overflow-hidden bg-[#eeeeee] pt-[6px] pl-[9px]">
        <button type="button" className="h-9 w-[119px] rounded-[4px] border border-[#cccccc] bg-white text-[#111]">
          参数图
        </button>
      </div>
    </section>
  );
}

const CX = 643;
const CY = 948;

// quarter ring drawn as short chords, clockwise from 12 o'clock
function chords(radius: number, from = 0, to = 90, steps = 16) {
  return Array.from({ length: steps + 1 }, (_, i) => {
    const angle = ((from + ((to - from) * i) / steps) * Math.PI) / 180;
    return [CX + radius * Math.sin(angle), CY - radius * Math.cos(angle)];
  });
}

const toPoints = (list: number[][]) => list.map((p) => p.map((n) => n.toFixed(1)).join(",")).join(" ");

const ringPoints = toPoints([...chords(663), ...chords(288).reverse()]);
const pathPoints = toPoints(chords(475, 4.1, 86, 16));

const axes = [643, 754, 878, 1117, 1281];

const bubbles = [
  { x: 643, y: 714, label: "4" },
  { x: 754, y: 714, label: "5" },
  { x: 878, y: 714, label: "9" },
  { x: 1117, y: 714, label: "10" },
  { x: 1280, y: 714, label: "12" },
  { x: 618, y: 947, label: "M" },
  { x: 643, y: 957, label: "4" },
  { x: 763, y: 957, label: "6" },
  { x: 816, y: 957, label: "7" },
  { x: 868, y: 957, label: "8" },
  { x: 1117, y: 957, label: "10" },
  { x: 1179, y: 957, label: "11" },
];

const dimensions = [
  { x: 608, label: "00" },
  { x: 698, label: "2300" },
  { x: 815, label: "2600" },
  { x: 998, label: "5000" },
  { x: 1199, label: "3400" },
  { x: 1314, label: "170" },
];

function ModelView() {
  return (
    <main className="min-w-0 flex-1 bg-black">
      <svg
        viewBox="600 249 724 711"
        preserveAspectRatio="xMinYMin slice"
        className="size-full font-['Noto_Sans_CJK_SC',sans-serif]"
        textAnchor="middle"
      >
        <path d="M600 948H1324" stroke="#8a0000" strokeWidth="2" />
        {axes.map((x) => (
          <path key={x} d={`M${x} 948v12`} stroke="#c40000" strokeWidth="2" />
        ))}
        <polygon points={ringPoints} fill="#a5a5a5" stroke="#f2ff00" strokeWidth="3" strokeLinejoin="round" />
        <polyline points={pathPoints} fill="none" stroke="#fff" strokeWidth="3" />
        <path d="M804 415L677 474L795 549" fill="none" stroke="#fff" strokeWidth="3" />
        <g stroke="#008000" strokeOpacity=".62" strokeWidth="2" fill="none">
          <path d="M600 804H1324M600 876H1324" />
          {axes.map((x) => (
            <path key={x} d={`M${x} 732V946M${x - 7} 883L${x + 7} 869`} />
          ))}
        </g>
        {bubbles.map((b) => (
          <g key={`${b.label}-${b.x}-${b.y}`}>
            <path
              d={`M${b.x} ${b.y - 18}l13 5l5 13l-5 13l-13 5l-13 -5l-5 -13l5 -13z`}
              fill="none"
              stroke="#067a06"
              strokeWidth="1.300"
            />
            <text x={b.x} y={b.y + 10} fontSize="27" fill="#f2f2f2">
              {b.label}
            </text>
          </g>
        ))}
        {dimensions.map((d) => (
          <text key={d.label} x={d.x} y="850" fontSize="27" fill="#f2f2f2">
            {d.label}
          </text>
        ))}
        <path d="M673 892v-20h-5l7.500-17 7.500 17h-5v20z" fill="#00ff00" />
        <path d="M683 897h19v-5l18 8-18 8v-5h-19z" fill="#ff0000" />
        <circle cx="675" cy="900" r="8" fill="#0000c0" />
        <text x="675" y="855" fontSize="22" fill="#00e000">Y</text>
        <text x="730" y="909" fontSize="25" fill="#ff0000">X</text>
      </svg>
    </main>
  );
}

export default function App() {
  return (
    <div className="flex h-screen flex-col overflow-hidden bg-white font-['Open_Sans','Noto_Sans_CJK_SC',sans-serif] text-[18px] leading-6">
      <Header />
      <Ribbon />
      <PickerBar />
      <div className="flex min-h-0 flex-1">
        <NavTree />
        <div className="ml-[7px] flex w-[413px] shrink-0 flex-col gap-[6px]">
          <MemberPanel />
          <PropertyPanel />
        </div>
        <div className="flex w-[6px] shrink-0 flex-col pt-[290px] pl-px">
          <button type="button" aria-label="收起" className="flex h-[149px] items-center justify-end bg-[#5f6973]">
            <svg viewBox="0 0 4 8" className="h-2 w-1">
              <path d="M4 0v8L0 4z" fill="#c9ced3" />
            </svg>
          </button>
        </div>
        <ModelView />
      </div>
    </div>
  );
}
